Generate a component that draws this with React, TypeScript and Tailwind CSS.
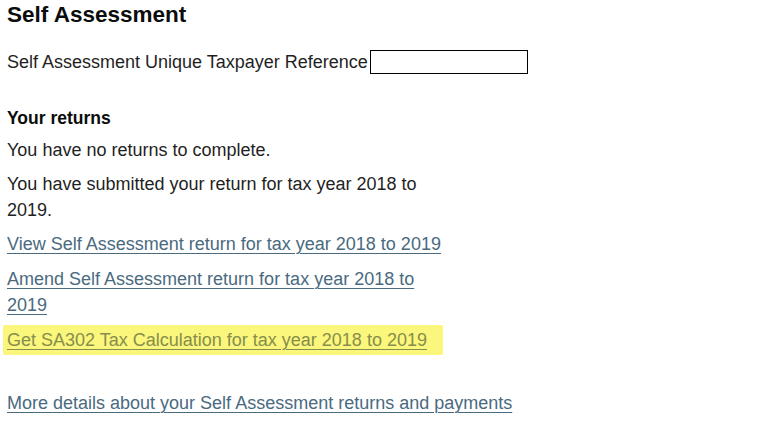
export default function App() {
  return (
    <div
      className="w-[760px] h-[422px] bg-white text-[#1f1f1f] pl-[7px] overflow-hidden"
      style={{ fontFamily: '"Liberation Sans", Arial, sans-serif' }}
    >
      <h1 className="text-[22.5px] leading-[30px] font-bold text-[#0b0c0c]">Self Assessment</h1>

      <div className="mt-[20px] flex items-center h-[24px] text-[18px]">
        <span>Self Assessment Unique Taxpayer Reference</span>
        <div className="ml-[2px] w-[158px] h-[24px] border border-black" />
      </div>

      <div className="mt-[31px] w-[445px] text-[18px] leading-[26px]">
        <h2 className="font-bold text-[17.5px] text-[#0b0c0c]">Your returns</h2>
        <p className="mt-[6px]">You have no returns to complete.</p>
        <p className="mt-[8px]">You have submitted your return for tax year 2018 to 2019.</p>
        <p className="mt-[8px]">
          <a href="#" className="text-[#4a6a80] underline underline-offset-[3px] decoration-1">
            View Self Assessment return for tax year 2018 to 2019
          </a>
        </p>
        <p className="mt-[9px]">
          <a href="#" className="text-[#4a6a80] underline underline-offset-[3px] decoration-1">
            Amend Self Assessment return for tax year 2018 to 2019
          </a>
        </p>
        <p className="mt-[7px] -ml-[4px] w-[440px] pl-[4px] py-[2px] bg-[#fbf67c] rounded-[2px]">
          <a href="#" className="text-[#868e4c] underline underline-offset-[3px] decoration-1">
            Get SA302 Tax Calculation for tax year 2018 to 2019
          </a>
        </p>
      </div>

      <p className="mt-[35px] text-[18px] leading-[26px]">
        <a href="#" className="text-[#4a6a80] underline underline-offset-[3px] decoration-1">
          More details about your Self Assessment returns and payments
        </a>
      </p>
    </div>
  );
}
